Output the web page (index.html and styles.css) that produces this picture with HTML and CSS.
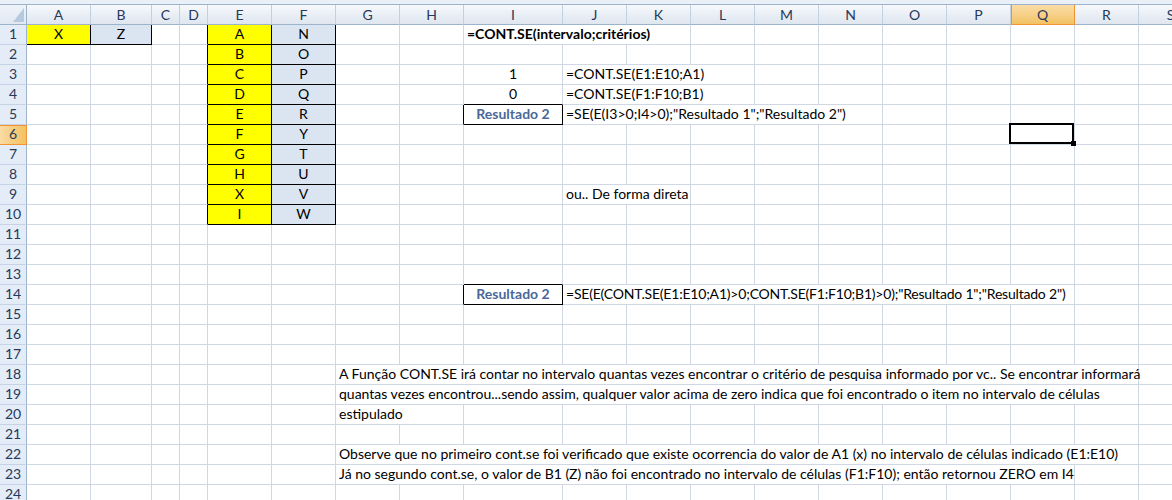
FILE: index.html
```html
<!DOCTYPE html>
<html lang="pt">
<head>
<meta charset="utf-8">
<title>CONT.SE</title>
<link rel="stylesheet" href="styles.css">
</head>
<body>
<div class="sheet">
  <div class="top"></div>
  <div class="row hdr"><span class="corner"></span><span>A</span><span>B</span><span>C</span><span>D</span><span>E</span><span>F</span><span>G</span><span>H</span><span>I</span><span>J</span><span>K</span><span>L</span><span>M</span><span>N</span><span>O</span><span>P</span><span class="on">Q</span><span>R</span><span>S</span></div>

  <div class="row"><span class="rh">1</span><span class="yel ctr bk">X</span><span class="blu ctr bk">Z</span><span></span><span class="br"></span><span class="yel ctr bk">A</span><span class="blu ctr bk">N</span><span></span><span></span><span class="s3 b">=CONT.SE(intervalo;critérios)</span><span></span><span></span><span></span><span></span><span></span><span></span><span></span><span></span></div>

  <div class="row"><span class="rh">2</span><span></span><span></span><span></span><span class="br"></span><span class="yel ctr bk">B</span><span class="blu ctr bk">O</span><span></span><span></span><span></span><span></span><span></span><span></span><span></span><span></span><span></span><span></span><span></span><span></span><span></span></div>

  <div class="row"><span class="rh">3</span><span></span><span></span><span></span><span class="br"></span><span class="yel ctr bk">C</span><span class="blu ctr bk">P</span><span></span><span></span><span class="ctr">1</span><span class="s3">=CONT.SE(E1:E10;A1)</span><span></span><span></span><span></span><span></span><span></span><span></span><span></span></div>

  <div class="row"><span class="rh">4</span><span></span><span></span><span></span><span class="br"></span><span class="yel ctr bk">D</span><span class="blu ctr bk">Q</span><span></span><span></span><span class="ctr bb">0</span><span class="s3">=CONT.SE(F1:F10;B1)</span><span></span><span></span><span></span><span></span><span></span><span></span><span></span></div>

  <div class="row"><span class="rh">5</span><span></span><span></span><span></span><span class="br"></span><span class="yel ctr bk">E</span><span class="blu ctr bk">R</span><span></span><span class="br"></span><span class="ctr bk res">Resultado 2</span><span class="s5">=SE(E(I3&gt;0;I4&gt;0);"Resultado 1";"Resultado 2")</span><span></span><span></span><span></span><span></span><span></span></div>

  <div class="row"><span class="rh on">6</span><span></span><span></span><span></span><span class="br"></span><span class="yel ctr bk">F</span><span class="blu ctr bk">Y</span><span></span><span></span><span></span><span></span><span></span><span></span><span></span><span></span><span></span><span></span><span class="sel"></span><span></span><span></span></div>

  <div class="row"><span class="rh">7</span><span></span><span></span><span></span><span class="br"></span><span class="yel ctr bk">G</span><span class="blu ctr bk">T</span><span></span><span></span><span></span><span></span><span></span><span></span><span></span><span></span><span></span><span></span><span></span><span></span><span></span></div>

  <div class="row"><span class="rh">8</span><span></span><span></span><span></span><span class="br"></span><span class="yel ctr bk">H</span><span class="blu ctr bk">U</span><span></span><span></span><span></span><span></span><span></span><span></span><span></span><span></span><span></span><span></span><span></span><span></span><span></span></div>

  <div class="row"><span class="rh">9</span><span></span><span></span><span></span><span class="br"></span><span class="yel ctr bk">X</span><span class="blu ctr bk">V</span><span></span><span></span><span></span><span class="s2">ou.. De forma direta</span><span></span><span></span><span></span><span></span><span></span><span></span><span></span><span></span></div>

  <div class="row"><span class="rh">10</span><span></span><span></span><span></span><span class="br"></span><span class="yel ctr bk">I</span><span class="blu ctr bk">W</span><span></span><span></span><span></span><span></span><span></span><span></span><span></span><span></span><span></span><span></span><span></span><span></span><span></span></div>

  <div class="row"><span class="rh">11</span><span></span><span></span><span></span><span></span><span></span><span></span><span></span><span></span><span></span><span></span><span></span><span></span><span></span><span></span><span></span><span></span><span></span><span></span><span></span></div>

  <div class="row"><span class="rh">12</span><span></span><span></span><span></span><span></span><span></span><span></span><span></span><span></span><span></span><span></span><span></span><span></span><span></span><span></span><span></span><span></span><span></span><span></span><span></span></div>

  <div class="row"><span class="rh">13</span><span></span><span></span><span></span><span></span><span></span><span></span><span></span><span></span><span class="bb"></span><span></span><span></span><span></span><span></span><span></span><span></span><span></span><span></span><span></span><span></span></div>

  <div class="row"><span class="rh">14</span><span></span><span></span><span></span><span></span><span></span><span></span><span></span><span class="br"></span><span class="ctr bk res">Resultado 2</span><span class="s8 tight">=SE(E(CONT.SE(E1:E10;A1)&gt;0;CONT.SE(F1:F10;B1)&gt;0);"Resultado 1";"Resultado 2")</span><span></span><span></span></div>

  <div class="row"><span class="rh">15</span><span></span><span></span><span></span><span></span><span></span><span></span><span></span><span></span><span></span><span></span><span></span><span></span><span></span><span></span><span></span><span></span><span></span><span></span><span></span></div>

  <div class="row"><span class="rh">16</span><span></span><span></span><span></span><span></span><span></span><span></span><span></span><span></span><span></span><span></span><span></span><span></span><span></span><span></span><span></span><span></span><span></span><span></span><span></span></div>

  <div class="row"><span class="rh">17</span><span></span><span></span><span></span><span></span><span></span><span></span><span></span><span></span><span></span><span></span><span></span><span></span><span></span><span></span><span></span><span></span><span></span><span></span><span></span></div>

  <div class="row"><span class="rh">18</span><span></span><span></span><span></span><span></span><span></span><span></span><span class="s12">A Função CONT.SE irá contar no intervalo quantas vezes encontrar o critério de pesquisa informado por vc.. Se encontrar informará</span><span></span></div>

  <div class="row"><span class="rh">19</span><span></span><span></span><span></span><span></span><span></span><span></span><span class="s12">quantas vezes encontrou...sendo assim, qualquer valor acima de zero indica que foi encontrado o item no intervalo de células</span><span></span></div>

  <div class="row"><span class="rh">20</span><span></span><span></span><span></span><span></span><span></span><span></span><span class="s2">estipulado</span><span></span><span></span><span></span><span></span><span></span><span></span><span></span><span></span><span></span><span></span><span></span></div>

  <div class="row"><span class="rh">21</span><span></span><span></span><span></span><span></span><span></span><span></span><span></span><span></span><span></span><span></span><span></span><span></span><span></span><span></span><span></span><span></span><span></span><span></span><span></span></div>

  <div class="row"><span class="rh">22</span><span></span><span></span><span></span><span></span><span></span><span></span><span class="s12">Observe que no primeiro cont.se foi verificado que existe ocorrencia do valor de A1 (x) no intervalo de células indicado (E1:E10)</span><span></span></div>

  <div class="row"><span class="rh">23</span><span></span><span></span><span></span><span></span><span></span><span></span><span class="s11">Já no segundo cont.se, o valor de B1 (Z) não foi encontrado no intervalo de células (F1:F10); então retornou ZERO em I4</span><span></span><span></span></div>

  <div class="row"><span class="rh">24</span><span></span><span></span><span></span><span></span><span></span><span></span><span></span><span></span><span></span><span></span><span></span><span></span><span></span><span></span><span></span><span></span><span></span><span></span><span></span></div>
</div>
</body>
</html>
```

FILE: styles.css
```css
html, body {
  margin: 0;
  padding: 0;
  background: #ffffff;
}

body {
  font-family: Lato, "Liberation Sans", sans-serif;
  color: #000;
  overflow: hidden;
}

.sheet {
  width: 1172px;
  height: 500px;
  overflow: hidden;
  background: #fff;
}

.top {
  height: 4px;
  background: #eaf0f8;
  border-bottom: 1px solid #9db3cc;
}

.row {
  display: grid;
  grid-template-columns: 27px 64px 61px 28px 28px 64px 64px 64px 64px 99px repeat(10, 64px);
  height: 20px;
}

.row > span {
  box-sizing: border-box;
  display: flex;
  align-items: flex-end;
  min-width: 0;
  padding: 0 3px 1px 3px;
  border-right: 1px solid #d0d7e5;
  border-bottom: 1px solid #d0d7e5;
  font-size: 14px;
  line-height: 18px;
  white-space: nowrap;
  overflow: visible;
}

/* header row */
.hdr > span {
  justify-content: center;
  align-items: center;
  padding: 0;
  background: linear-gradient(#f7f9fc, #e9eef5 55%, #dfe6ef);
  border-right: 1px solid #c3d0e0;
  border-bottom: 1px solid #9db3cc;
  color: #27395a;
}

.hdr > span.on {
  background: linear-gradient(#f9dba4, #f7d18a 50%, #f2c161);
  border-right: 1px solid #f29436;
  border-bottom: 1px solid #f29436;
  box-shadow: inset 1px 0 0 #f29436;
  color: #27395a;
}

.hdr > span.corner {
  position: relative;
  background: linear-gradient(#eef3f9, #e2e9f2);
  border-right: 1px solid #9db3cc;
}

.corner::after {
  content: "";
  position: absolute;
  right: 2px;
  bottom: 2px;
  width: 11px;
  height: 14px;
  background: #b6c9df;
  clip-path: polygon(100% 0, 100% 100%, 0 100%);
}

/* row headers */
.row > span.rh {
  justify-content: center;
  padding: 0 0 1px 0;
  background: #e4ecf7;
  border-right: 1px solid #9db3cc;
  border-bottom: 1px solid #c5d3e4;
  color: #27395a;
}

.row > span.rh.on {
  background: linear-gradient(to right, #f9dba4, #f2c161);
  border-right: 1px solid #f29436;
  border-bottom: 1px solid #f29436;
  box-shadow: inset 0 1px 0 #f29436;
}

/* cell styles */
.ctr { justify-content: center; }
.b { font-weight: 700; }
.yel { background: #ffff00; }
.blu { background: #dbe5f1; }
.tight { letter-spacing: -0.2px; }

.row > span.bk {
  border-right-color: #000;
  border-bottom-color: #000;
}

.row > span.br { border-right-color: #000; }
.row > span.bb { border-bottom-color: #000; }

.res {
  font-weight: 700;
  color: #4a6899;
}

.s2 { grid-column: span 2; }
.s3 { grid-column: span 3; }
.s5 { grid-column: span 5; }
.s8 { grid-column: span 8; }
.s11 { grid-column: span 11; }
.s12 { grid-column: span 12; }

/* active cell */
.sel { position: relative; }

.sel::after {
  content: "";
  position: absolute;
  left: -2px;
  top: -2px;
  right: 0;
  bottom: 0;
  border: 2px solid #000;
}

.sel::before {
  content: "";
  position: absolute;
  right: -2px;
  bottom: -2px;
  width: 5px;
  height: 5px;
  background: #000;
  z-index: 1;
}
```
